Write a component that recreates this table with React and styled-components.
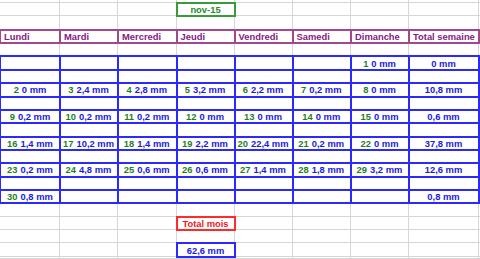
import React from "react";
import styled, { createGlobalStyle, css } from "styled-components";

const Global = createGlobalStyle`
  html, body {
    margin: 0;
    padding: 0;
    background: #fff;
    overflow: hidden;
  }
  body {
    font-family: "Liberation Sans", Arial, sans-serif;
  }
`;

const Sheet = styled.div`
  display: grid;
  width: 480px;
  height: 259px;
  overflow: hidden;
  background: #fff;
  grid-template-columns: 60px 58px 58.5px 58px 58px 58.5px 58px 70px 1fr;
  grid-template-rows: 3px repeat(19, 13.37px) 1fr;
  font-size: 9.4px;
  font-weight: bold;
  line-height: 1;
`;

const Cell = styled.div`
  box-sizing: border-box;
  display: flex;
  align-items: center;
  justify-content: ${(p) => (p.$left ? "flex-start" : "center")};
  padding-left: ${(p) => (p.$left ? "3px" : "0")};
  padding-top: 1px;
  white-space: nowrap;
  min-width: 0;
  color: ${(p) => p.$color || "#1a1ae6"};
  border-right: ${(p) => (p.$last ? "none" : "1px solid #d6d6d6")};
  border-bottom: 1px solid #d6d6d6;

  ${(p) =>
    p.$box &&
    css`
      position: relative;
      z-index: 1;
      border: 2px solid ${p.$box};
      border-left-width: ${p.$l ? 2 : 0}px;
      border-top-width: ${p.$t ? 2 : 0}px;
      margin: ${p.$t ? -1 : 0}px -1px -1px ${p.$l ? -1 : 0}px;
    `}
`;

const Day = styled.span`
  color: #1f7f1f;
  margin-right: 3px;
`;

const Amount = styled.span`
  color: #1a1ae6;
`;

const BLUE = "#2a2aff";
const PURPLE = "#a3478f";

const heads = ["Lundi", "Mardi", "Mercredi", "Jeudi", "Vendredi", "Samedi", "Dimanche", "Total semaine"];

const weeks = {
  4: { days: [null, null, null, null, null, null, ["1", "0"]], total: "0" },
  6: {
    days: [["2", "0"], ["3", "2,4"], ["4", "2,8"], ["5", "3,2"], ["6", "2,2"], ["7", "0,2"], ["8", "0"]],
    total: "10,8",
  },
  8: {
    days: [["9", "0,2"], ["10", "0,2"], ["11", "0,2"], ["12", "0"], ["13", "0"], ["14", "0"], ["15", "0"]],
    total: "0,6",
  },
  10: {
    days: [["16", "1,4"], ["17", "10,2"], ["18", "1,4"], ["19", "2,2"], ["20", "22,4"], ["21", "0,2"], ["22", "0"]],
    total: "37,8",
  },
  12: {
    days: [["23", "0,2"], ["24", "4,8"], ["25", "0,6"], ["26", "0,6"], ["27", "1,4"], ["28", "1,8"], ["29", "3,2"]],
    total: "12,6",
  },
  14: { days: [["30", "0,8"], null, null, null, null, null, null], total: "0,8" },
};

function renderCell(k, c) {
  const key = `${k}-${c}`;
  const last = c === 8;
  if (k === 0 && c === 3)
    return (
      <Cell key={key} $box="#3a9a3a" $l $t $color="#2a8a2a">
        nov-15
      </Cell>
    );
  if (k === 2 && c < 8)
    return (
      <Cell key={key} $box={PURPLE} $l $t $left $color="#85207f">
        {heads[c]}
      </Cell>
    );
  if (k >= 4 && k <= 14 && c < 8) {
    const week = weeks[k];
    let content = null;
    if (week) {
      if (c === 7) content = <Amount>{week.total} mm</Amount>;
      else if (week.days[c])
        content = (
          <>
            <Day>{week.days[c][0]}</Day>
            <Amount>{week.days[c][1]} mm</Amount>
          </>
        );
    }
    return (
      <Cell key={key} $box={BLUE} $l={c === 0} $t={k === 4}>
        {content}
      </Cell>
    );
  }
  if (k === 16 && c === 3)
    return (
      <Cell key={key} $box="#ff2a2a" $l $t $color="#f01818">
        Total mois
      </Cell>
    );
  if (k === 18 && c === 3)
    return (
      <Cell key={key} $box={BLUE} $l $t>
        62,6 mm
      </Cell>
    );
  return <Cell key={key} $last={last} />;
}

export default function App() {
  const cells = [];
  for (let r = 0; r < 21; r++) {
    for (let c = 0; c < 9; c++) {
      cells.push(renderCell(r - 1, c));
    }
  }
  return (
    <>
      <Global />
      <Sheet>{cells}</Sheet>
    </>
  );
}
